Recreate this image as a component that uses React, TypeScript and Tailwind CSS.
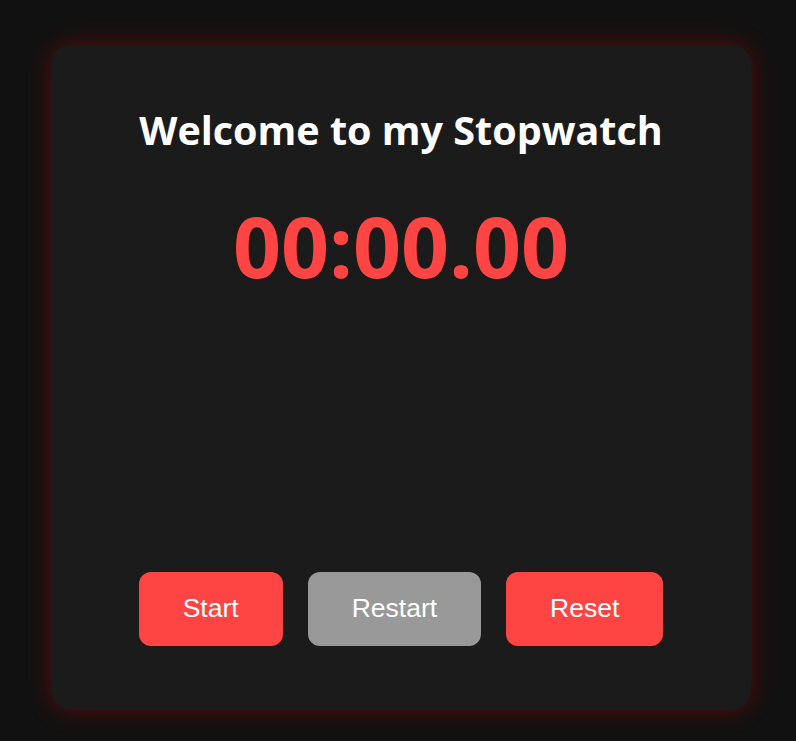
import React from 'react';

const App = () => {
  return (
    <div className="min-h-screen bg-[#111111] pt-[45px] pl-[51px]">
      {/* Card */}
      <div className="w-[700px] h-[665px] bg-[#1b1b1b] rounded-[20px] shadow-[0_0_25px_rgba(255,0,0,0.3)] flex flex-col items-center pt-[58px] pb-[64px] font-['Open_Sans',sans-serif]">
        <h1 className="text-[39.5px] leading-[54px] font-bold text-white">
          Welcome to my Stopwatch
        </h1>
        <div className="mt-[36px] text-[84px] leading-[106px] font-bold text-[#ff4444]">
          00:00.00
        </div>

        <div className="mt-auto flex gap-[25px] font-['Liberation_Sans',Arial,sans-serif]">
          <button className="h-[74px] px-[44px] rounded-[12px] bg-[#ff4444] text-white text-[26.5px]">
            Start
          </button>
          <button className="h-[74px] px-[44px] rounded-[12px] bg-[#999999] text-white text-[26.5px]">
            Restart
          </button>
          <button className="h-[74px] px-[44px] rounded-[12px] bg-[#ff4444] text-white text-[26.5px]">
            Reset
          </button>
        </div>
      </div>
    </div>
  );
};

export default App;
